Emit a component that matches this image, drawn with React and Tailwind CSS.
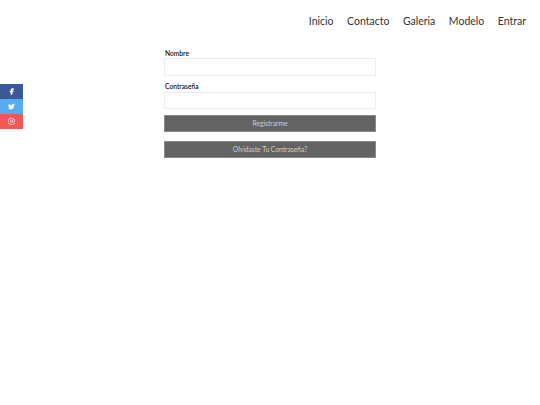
import { Facebook, Twitter, Instagram } from 'lucide-react';

const links = ['Inicio', 'Contacto', 'Galeria', 'Modelo', 'Entrar'];

const socials = [
  { name: 'facebook', color: 'bg-[#3b5998]', icon: Facebook },
  { name: 'twitter', color: 'bg-[#55acee]', icon: Twitter },
  { name: 'instagram', color: 'bg-[#ed5a54]', icon: Instagram },
];

const App = () => {
  return (
    <div className="relative min-h-[405px] bg-white font-['Lato','Liberation_Sans',sans-serif]">
      <nav className="flex justify-end gap-[13.5px] pt-[13px] pr-[14px] h-[48px] text-[10.5px] leading-[16px] text-[#333]">
        {links.map((link) => (
          <a key={link} href="#">{link}</a>
        ))}
      </nav>

      <div className="fixed left-0 top-[84px] w-[23px] flex flex-col">
        {socials.map((s) => (
          <a key={s.name} href="#" className={`${s.color} h-[15px] flex items-center justify-center text-white`}>
            <s.icon size={7} fill={s.name === 'instagram' ? 'none' : 'currentColor'} />
          </a>
        ))}
      </div>

      <form className="w-[212px] mx-auto flex flex-col text-[6.7px]">
        <label className="h-[10px] leading-[10px] font-medium text-black pl-px">Nombre</label>
        <input className="h-[18px] border border-[#ececec] mb-[5px]" />
        <label className="mt-[1px] h-[9px] leading-[9px] font-medium text-black pl-px">Contraseña</label>
        <input className="h-[17px] mt-[1px] border border-[#ececec] mb-[6px]" />
        <button type="button" className="h-[17px] bg-[#636363] border border-[#8a8a8a] text-[#cfcfcf]">Registrarme</button>
        <button type="button" className="h-[17px] mt-[9px] bg-[#636363] border border-[#8a8a8a] text-[#cfcfcf]">Olvidaste Tu Contraseña?</button>
      </form>
    </div>
  );
};

export default App;
